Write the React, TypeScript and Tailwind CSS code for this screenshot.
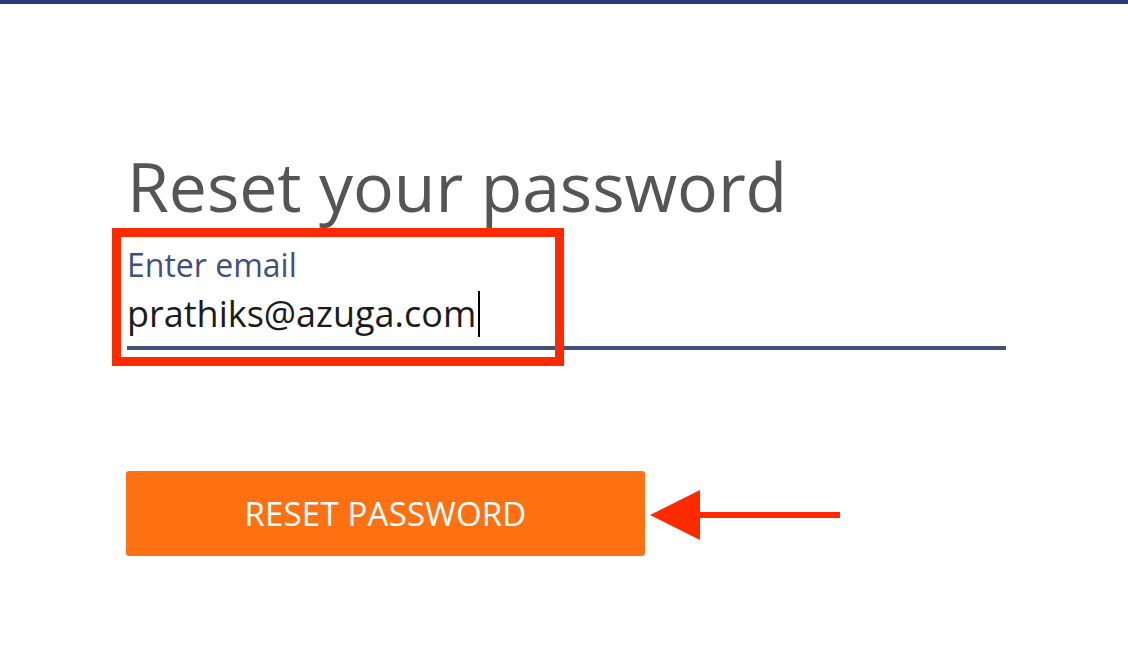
import React from "react";

const font = { fontFamily: "'Open Sans', 'Noto Sans', sans-serif" };

// red annotation arrow pointing at the button
const PointerArrow: React.FC = () => (
  <svg width="194" height="54" viewBox="0 0 194 54" className="block">
    <polygon points="2,27 52,2 52,52" fill="#ff2a00" />
    <rect x="50" y="24" width="142" height="6" fill="#ff2a00" />
  </svg>
);

const App: React.FC = () => {
  return (
    <div className="relative w-[1128px] h-[662px] bg-white overflow-hidden" style={font}>
      <div className="h-[4px] bg-[#2b3a7c]" />

      <div className="flex flex-col items-start pl-[127px] pt-[148px]">
        <h1 className="text-[68px] leading-none text-[#555555] font-normal tracking-[-0.1px]">
          Reset your password
        </h1>

        <div className="mt-[29px] w-[879px]">
          <label className="block text-[32px] leading-none text-[#3f5179]">Enter email</label>
          <div className="mt-[15px] h-[36px] flex items-center">
            <span className="text-[36px] leading-none text-[#1b1b1b]">prathiks@azuga.com</span>
            <span className="ml-[2px] w-[1.5px] h-[46px] bg-black shrink-0" />
          </div>
          <div className="mt-[14px] h-[4px] bg-[#41527a]" />
        </div>

        <button className="mt-[121px] ml-[-1px] w-[519px] h-[85px] rounded-[3px] bg-[#fe7112] text-white text-[33px] tracking-[0.2px] flex items-center justify-center">
          RESET PASSWORD
        </button>
      </div>

      {/* annotation overlays */}
      <div className="absolute left-[112px] top-[228px] w-[452px] h-[138px] border-[9px] border-[#ff2a00]" />
      <div className="absolute left-[648px] top-[488px]">
        <PointerArrow />
      </div>
    </div>
  );
};

export default App;
